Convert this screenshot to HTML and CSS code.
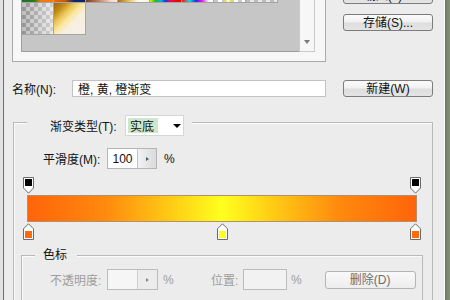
FILE: index.html
```html
<!DOCTYPE html>
<html lang="zh">
<head>
<meta charset="utf-8">
<title>渐变编辑器</title>
<link rel="stylesheet" href="styles.css">
</head>
<body>
<div class="window">
  <div class="edge-left"></div>
  <div class="dialog">
    <div class="top">
      <div class="presets">
        <div class="list">
          <div class="swatches">
            <div class="sw s1"></div><div class="sw s2"></div><div class="sw s3"></div><div class="sw s4"></div>
            <div class="sw s5"></div><div class="sw s6"></div><div class="sw s7"></div><div class="sw s8"></div>
            <div class="sw s9"></div><div class="sw s10"></div>
          </div>
        </div>
        <div class="scroll"><span class="scroll-arrow"></span></div>
      </div>
      <div class="buttons">
        <div class="btn">载入(L)...</div>
        <div class="btn">存储(S)...</div>
      </div>
    </div>

    <div class="name-row">
      <span class="name-label">名称(N):</span>
      <div class="name-input">橙, 黄, 橙渐变</div>
      <div class="btn new-btn">新建(W)</div>
    </div>

    <div class="group">
      <div class="legend">
        <span class="legend-text">渐变类型(T):</span>
        <div class="select"><span class="select-value">实底</span><span class="select-arrow"></span></div>
      </div>

      <div class="smooth-row">
        <span class="smooth-label">平滑度(M):</span>
        <div class="num-input"><span class="num-value">100</span><span class="spin"><span class="spin-arrow"></span></span></div>
        <span class="pct">%</span>
      </div>

      <div class="stops">
        <svg class="stop" width="11" height="17" viewBox="0 0 11 17"><path d="M0.5 0.5H10.5V11L5.5 16.2L0.5 11Z" fill="#fff" stroke="#6b6b6b"/><rect x="2" y="2" width="7" height="7" fill="#000"/></svg>
        <svg class="stop" width="11" height="17" viewBox="0 0 11 17"><path d="M0.5 0.5H10.5V11L5.5 16.2L0.5 11Z" fill="#fff" stroke="#6b6b6b"/><rect x="2" y="2" width="7" height="7" fill="#000"/></svg>
      </div>
      <div class="bar"></div>
      <div class="stops bottom">
        <svg class="stop" width="11" height="17" viewBox="0 0 11 17"><path d="M5.5 0.8L10.5 5.8V16.5H0.5V5.8Z" fill="#fff" stroke="#6b6b6b"/><rect x="2" y="8" width="7" height="7" fill="#ff6a0a"/></svg>
        <svg class="stop" width="11" height="17" viewBox="0 0 11 17"><path d="M5.5 0.8L10.5 5.8V16.5H0.5V5.8Z" fill="#fff" stroke="#6b6b6b"/><rect x="2" y="8" width="7" height="7" fill="#ffff1e"/></svg>
        <svg class="stop" width="11" height="17" viewBox="0 0 11 17"><path d="M5.5 0.8L10.5 5.8V16.5H0.5V5.8Z" fill="#fff" stroke="#6b6b6b"/><rect x="2" y="8" width="7" height="7" fill="#ff6a0a"/></svg>
      </div>

      <div class="subgroup">
        <div class="sublegend">色标</div>
        <div class="stop-row">
          <span class="dis-label opac-label">不透明度:</span>
          <div class="dis-input opac-input"><span class="dis-field"></span><span class="dis-spin"><span class="dis-arrow"></span></span></div>
          <span class="dis-label pct2">%</span>
          <span class="dis-label pos-label">位置:</span>
          <div class="dis-input pos-input"></div>
          <span class="dis-label pct3">%</span>
          <div class="btn del-btn">删除(D)</div>
        </div>
      </div>
    </div>
  </div>
  <div class="edge-right"></div>
</div>
</body>
</html>
```

FILE: styles.css
```css
html, body {
  margin: 0;
  padding: 0;
}
body {
  width: 450px;
  height: 300px;
  overflow: hidden;
  background: #ececec;
  font-family: "Liberation Sans", "Noto Sans CJK SC", sans-serif;
  font-size: 12px;
  color: #111;
}
.window {
  display: flex;
  height: 300px;
}
.edge-left {
  width: 3px;
  background: #e2e2e2;
  border-right: 1px solid #6f7069;
  flex: none;
}
.dialog {
  width: 440px;
  flex: none;
  overflow: hidden;
}
.edge-right {
  flex: none;
  width: 6px;
  border-left: 1px solid #fafafa;
  background: linear-gradient(90deg, #6c7a60, #8c9881);
}

/* top: presets + buttons */
.top {
  display: flex;
  margin-top: -40px;
  padding-left: 8px;
}
.presets {
  box-sizing: border-box;
  width: 314px;
  height: 102px;
  border: 1px solid #a9a9a9;
  background: #f7f7f7;
  padding: 9px 10px 9px 8px;
  display: flex;
}
.list {
  box-sizing: border-box;
  width: 278px;
  height: 82px;
  background: #c6c6c6;
  border: 1px solid #9e9e9e;
  border-right: none;
  overflow: hidden;
}
.swatches {
  display: grid;
  grid-template-columns: repeat(8, 32px);
  grid-auto-rows: 32px;
}
.sw {
  box-sizing: border-box;
  border-right: 1px solid #a5a5a5;
  border-bottom: 1px solid #a5a5a5;
}
.s1 { background: linear-gradient(90deg, #16702a 0%, #2d7a1c 40%, #f07a12 60%, #f57a10 100%); }
.s2 { background: linear-gradient(90deg, #e86a0c 0%, #c85a10 35%, #0c2a70 65%, #0a2566 100%); }
.s3 { background: linear-gradient(90deg, #7a3c24 0%, #c98768 45%, #f2d8cc 80%, #f6ebe6 100%); }
.s4 { background: linear-gradient(90deg, #a87016 0%, #e7c060 35%, #fffbe8 65%, #f4f4f4 100%); }
.s5 { background: linear-gradient(90deg, #e8f000 0%, #10c020 18%, #10b0e0 35%, #2030e0 50%, #e01060 65%, #f00000 85%, #f00000 100%); }
.s6 { background: linear-gradient(90deg, #ff1010 0%, #10e0e0 25%, #3020e0 45%, #e020e0 65%, #f8f0f8 85%, #ffffff 100%); }
.s7 {
  background:
    linear-gradient(90deg, transparent 30%, rgba(240,230,40,.85) 38%, transparent 46%, rgba(240,230,40,.85) 56%, transparent 66%),
    conic-gradient(#c8c8c8 25%, #fff 0 50%, #c8c8c8 0 75%, #fff 0) 0 0 / 8px 8px;
}
.s8 {
  background: conic-gradient(#bcbcbc 25%, #e8e8e8 0 50%, #bcbcbc 0 75%, #e8e8e8 0) 0 0 / 8px 8px;
}
.s9 {
  background:
    linear-gradient(90deg, rgba(120,120,120,.25), rgba(255,255,255,.55)),
    conic-gradient(#9c9c9c 25%, #d6d6d6 0 50%, #9c9c9c 0 75%, #d6d6d6 0) 0 0 / 8px 8px;
}
.s10 {
  background: linear-gradient(135deg, #9c6410 0%, #c08a18 18%, #ecc658 34%, #fbe7a0 48%, #f8efdc 62%, #f6f0ea 100%);
}
.scroll {
  box-sizing: border-box;
  width: 16px;
  height: 82px;
  background: #f7f7f7;
  border: 1px solid #c9c9c9;
  display: flex;
  justify-content: center;
  align-items: flex-end;
  padding-bottom: 7px;
}
.scroll-arrow {
  width: 0;
  height: 0;
  border-left: 3.5px solid transparent;
  border-right: 3.5px solid transparent;
  border-top: 4px solid #7a7a7a;
}
.buttons {
  margin-left: 17px;
  margin-top: 27px;
  display: flex;
  flex-direction: column;
  gap: 10px;
}
.btn {
  box-sizing: border-box;
  width: 90px;
  height: 17px;
  border: 1px solid #7c7c7c;
  border-radius: 3px;
  background: linear-gradient(#fbfbfb 0%, #f1f1f1 45%, #dedede 55%, #e4e4e4 100%);
  display: flex;
  align-items: center;
  justify-content: center;
  line-height: 1;
  color: #111;
}

/* name row */
.name-row {
  display: flex;
  align-items: center;
  margin-top: 18px;
  padding-left: 8px;
  height: 17px;
}
.name-label {
  width: 60px;
}
.name-input {
  box-sizing: border-box;
  width: 254px;
  height: 17px;
  background: #fff;
  border: 1px solid #c2c2c2;
  padding-left: 5px;
  display: flex;
  align-items: center;
}
.new-btn {
  margin-left: 17px;
}

/* gradient type group */
.group {
  box-sizing: border-box;
  margin-top: 25px;
  margin-left: 9px;
  width: 420px;
  height: 220px;
  border: 1px solid #b9b9b9;
  box-shadow: inset 1px 1px 0 #fbfbfb;
}
.legend {
  display: flex;
  align-items: center;
  width: fit-content;
  height: 21px;
  margin-top: -8px;
  margin-left: 13px;
  padding: 0 8px 0 23px;
  background: #ececec;
}
.legend-text {
  width: 75px;
}
.select {
  box-sizing: border-box;
  width: 59px;
  height: 21px;
  border: 1px solid #d6d6d6;
  background: #fff;
  display: flex;
  align-items: center;
  padding: 2px;
}
.select-value {
  box-sizing: border-box;
  width: 30px;
  height: 100%;
  background: #cde8cc;
  display: flex;
  align-items: center;
  padding-left: 2px;
}
.select-arrow {
  margin-left: 15px;
  width: 0;
  height: 0;
  border-left: 4px solid transparent;
  border-right: 4px solid transparent;
  border-top: 4px solid #000;
}

.smooth-row {
  display: flex;
  align-items: center;
  margin-top: 12px;
  padding-left: 29px;
  height: 21px;
}
.smooth-label {
  width: 64px;
}
.num-input {
  box-sizing: border-box;
  width: 50px;
  height: 21px;
  border: 1px solid #b5b5b5;
  display: flex;
  background: #fff;
}
.num-value {
  width: 29px;
  display: flex;
  align-items: center;
  justify-content: center;
}
.spin {
  flex: 1;
  border-left: 1px solid #c4c4c4;
  background: linear-gradient(90deg, #f2f2f2, #dadada);
  display: flex;
  align-items: center;
  justify-content: center;
}
.spin-arrow {
  width: 0;
  height: 0;
  border-top: 2.5px solid transparent;
  border-bottom: 2.5px solid transparent;
  border-left: 3px solid #4a5a78;
}
.pct {
  margin-left: 7px;
}

/* gradient bar + stops */
.stops {
  display: flex;
  justify-content: space-between;
  margin-top: 8px;
  margin-left: 9px;
  width: 398px;
  height: 17px;
}
.stops.bottom {
  margin-top: 1px;
}
.stop {
  display: block;
}
.bar {
  box-sizing: border-box;
  margin-top: 1px;
  margin-left: 13px;
  width: 390px;
  height: 27px;
  border: 1px solid #b09070;
  background: linear-gradient(90deg, #ff640a 0%, #ff8a0e 20%, #ffc814 36%, #ffff1e 50%, #ffc814 64%, #ff8a0e 80%, #ff640a 100%);
}

/* color stop subgroup */
.subgroup {
  box-sizing: border-box;
  margin-top: 15px;
  margin-left: 7px;
  width: 402px;
  height: 80px;
  border: 1px solid #b9b9b9;
  box-shadow: inset 1px 1px 0 #fbfbfb;
}
.sublegend {
  width: fit-content;
  height: 14px;
  line-height: 14px;
  margin-top: -8px;
  margin-left: 13px;
  padding: 0 10px 0 8px;
  background: #ececec;
}
.stop-row {
  display: flex;
  align-items: center;
  margin-top: 7px;
  padding-left: 28px;
  height: 21px;
}
.dis-label {
  color: #9d9d9d;
}
.opac-label {
  width: 57px;
}
.dis-input {
  box-sizing: border-box;
  height: 21px;
  border: 1px solid #bcbcbc;
  background: #f2f2f2;
  display: flex;
}
.opac-input {
  width: 51px;
}
.dis-field {
  width: 29px;
  border-right: 1px solid #cfcfcf;
  background: #f6f6f6;
}
.dis-spin {
  flex: 1;
  display: flex;
  align-items: center;
  justify-content: center;
  background: #ececec;
}
.dis-arrow {
  width: 0;
  height: 0;
  border-top: 2.5px solid transparent;
  border-bottom: 2.5px solid transparent;
  border-left: 3px solid #8a8a8a;
}
.pct2 {
  margin-left: 5px;
  width: 48px;
}
.pos-label {
  width: 32px;
}
.pos-input {
  width: 44px;
}
.pct3 {
  margin-left: 4px;
}
.del-btn {
  margin-left: 23px;
  width: 91px;
  height: 18px;
  border-color: #b4b4b4;
  background: linear-gradient(#f9f9f9, #ededed);
  color: #6d6d6d;
}
```
